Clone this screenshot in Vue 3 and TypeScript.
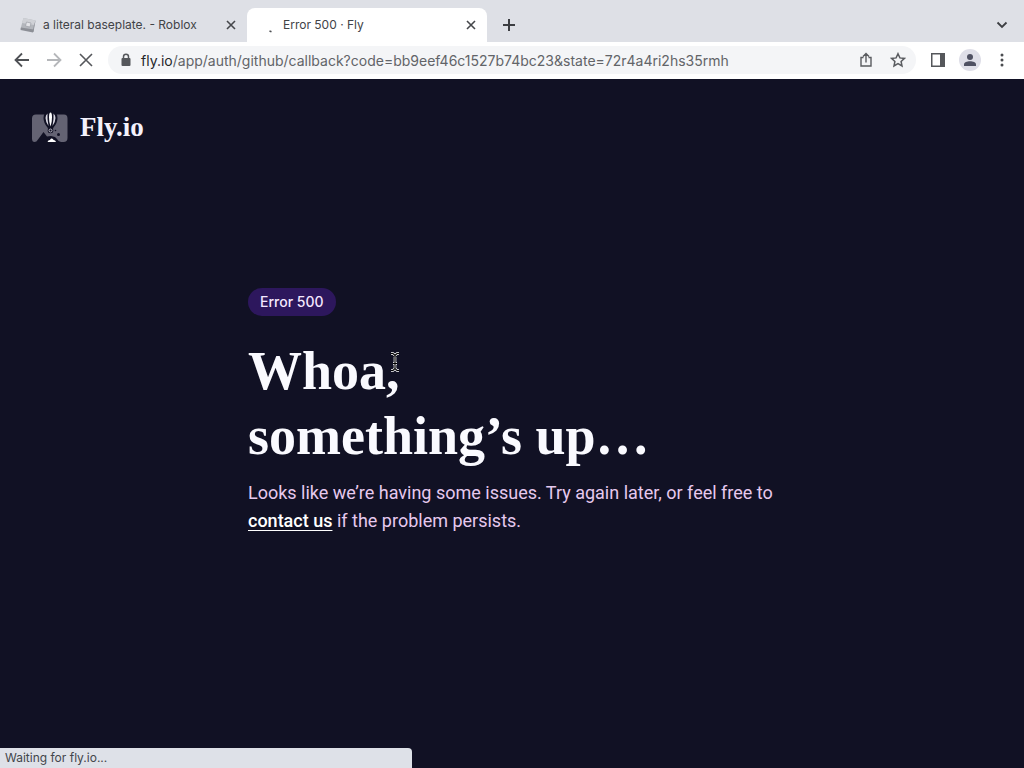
<script setup lang="ts">
import { ref } from 'vue'

interface Tab {
  title: string
  loading: boolean
}

const tabs: Tab[] = [
  { title: 'a literal baseplate. - Roblox', loading: false },
  { title: 'Error 500 · Fly', loading: true },
]
const active = ref(1)
const host = 'fly.io'
const path = ref('/app/auth/github/callback?code=bb9eef46c1527b74bc23&state=72r4a4ri2hs35rmh')
</script>

<template>
  <div class="window">
    <div class="tabstrip">
      <div v-for="(tab, i) in tabs" :key="tab.title" class="tab" :class="{ active: i === active }">
        <button class="tab-main" type="button" @click="active = i">
          <svg v-if="tab.loading" class="favicon" viewBox="0 0 16 16" aria-hidden="true">
            <path d="M9.500 14l2 .8" stroke="#4d4f53" stroke-width="1.5" />
          </svg>
          <svg v-else class="favicon" viewBox="0 0 16 16" aria-hidden="true">
            <path d="M3.500 1L15.500 3.500 13 14.500 0.500 12z" fill="#b3b6bc" />
            <path d="M3.500 1L15.500 3.500 14.500 8 2 6z" fill="#cfd1d6" />
            <path d="M1 10.500l12.500 2-.5 3L0.500 13z" fill="#8c8f96" />
            <path d="M14 8l1.500-4.500L13.500 15h-1z" fill="#8c8f96" />
            <path d="M6.500 5l4.500 1-1 4-4.500-1z" fill="#e3e4e8" stroke="#9da0a7" stroke-width=".7" />
          </svg>
          <span>{{ tab.title }}</span>
        </button>
        <button class="tab-close" type="button" :aria-label="`Close ${tab.title}`">
          <svg width="10" height="10" viewBox="0 0 10 10"><path d="M1 1l8 8M9 1L1 9" stroke="#45474b" stroke-width="1.6" /></svg>
        </button>
      </div>
      <button class="new-tab" type="button" aria-label="New tab">
        <svg width="14" height="14" viewBox="0 0 14 14"><path d="M7 1v12M1 7h12" stroke="#3c3e42" stroke-width="2" /></svg>
      </button>
      <button class="tab-search" type="button" aria-label="Search tabs">
        <svg width="12" height="8" viewBox="0 0 12 8"><path d="M1.500 1.500L6 6l4.500-4.500" fill="none" stroke="#3c3e42" stroke-width="1.800" /></svg>
      </button>
    </div>

    <div class="toolbar">
      <button class="tool" type="button" aria-label="Back">
        <svg width="16" height="16" viewBox="0 0 16 16"><path d="M15 8H2M8 1.500L1.500 8 8 14.500" fill="none" stroke="#4f5155" stroke-width="1.800" /></svg>
      </button>
      <button class="tool" type="button" aria-label="Forward">
        <svg width="16" height="16" viewBox="0 0 16 16"><path d="M1 8h13M8 1.500L14.500 8 8 14.500" fill="none" stroke="#b5b7ba" stroke-width="1.800" /></svg>
      </button>
      <button class="tool" type="button" aria-label="Stop loading">
        <svg width="16" height="16" viewBox="0 0 16 16"><path d="M2 2l12 12M14 2L2 14" stroke="#55575b" stroke-width="1.600" /></svg>
      </button>

      <div class="omnibox">
        <svg class="lock" width="10" height="14" viewBox="0 0 10 14" aria-hidden="true">
          <path d="M2.500 6V3.800a2.500 2.500 0 0 1 5 0V6" fill="none" stroke="#55575b" stroke-width="1.500" />
          <rect x="0.500" y="5" width="9" height="8" rx="1" fill="#55575b" />
        </svg>
        <label for="address">{{ host }}</label>
        <input id="address" v-model="path" type="text" spellcheck="false" />
        <button class="tool" type="button" aria-label="Share this page">
          <svg width="14" height="16" viewBox="0 0 14 16"><path d="M4.500 5.500H2v8.500h10V5.500H9.500M7 10.500V2M4 4.500l3-3 3 3" fill="none" stroke="#5a5c60" stroke-width="1.400" /></svg>
        </button>
        <button class="tool" type="button" aria-label="Bookmark this page">
          <svg width="16" height="16" viewBox="0 0 16 16"><path d="M8 1.700l1.900 4.200 4.600.5-3.400 3.100.9 4.500-4-2.300L4 14l.9-4.500-3.400-3.100 4.600-.5z" fill="none" stroke="#5a5c60" stroke-width="1.500" /></svg>
        </button>
      </div>

      <button class="tool" type="button" aria-label="Side panel">
        <svg width="14" height="14" viewBox="0 0 14 14"><rect x="0.750" y="0.750" width="12.500" height="12.500" fill="none" stroke="#55575b" stroke-width="1.500" /><path d="M9 1h4v12H9z" fill="#55575b" /></svg>
      </button>
      <button class="tool" type="button" aria-label="Profile">
        <svg width="22" height="22" viewBox="0 0 22 22"><circle cx="11" cy="11" r="11" fill="#dfdfe8" /><circle cx="11" cy="8" r="3" fill="#4f5162" /><path d="M5 17v-1.500c0-2 3-3.200 6-3.200s6 1.200 6 3.200V17z" fill="#4f5162" /></svg>
      </button>
      <button class="tool" type="button" aria-label="Menu">
        <svg width="4" height="16" viewBox="0 0 4 16" fill="#4a4c50"><circle cx="2" cy="3" r="1.500" /><circle cx="2" cy="8" r="1.500" /><circle cx="2" cy="13" r="1.500" /></svg>
      </button>
    </div>

    <div class="page">
      <header>
        <a class="brand" href="#">
          <svg width="36" height="32" viewBox="0 0 36 32" aria-hidden="true">
            <path d="M4 3.500h28q3.500 0 3.500 4V27q0 4-4 4h-2.500q-2.500 0-4-3l-2-2-4-1-4 .5-3.500-4.500-5.500 7.500q-1.500 2.500-3.500 2.500Q0 31 0 27.500V7.500q0-4 4-4z" fill="#646373" />
            <path d="M11.500 7Q11.500 0 18.500 0t7 7q0 5-4 9.500-1 1.500-1 5h-4q0-3.500-1-5-4-4.500-4-9.500z" fill="#111124" />
            <path d="M15.500 2.500q-2 1.500-2 4.500 0 3.500 3 8-1.500-7-1-12.500zM21.500 2.500q2 1.500 2 4.500 0 3.500-3 8 1.500-7 1-12.500z" fill="#d9d8e2" />
            <path d="M18.500 1.500q-1.500 0-1.500 5 0 5 1.500 9 1.500-4 1.500-9 0-5-1.500-5z" fill="#fff" />
            <circle cx="18.500" cy="19.500" r="2.800" fill="#111124" />
            <circle cx="18.500" cy="19.500" r="1.500" fill="none" stroke="#b8b7c3" stroke-width="1" />
            <circle cx="26.500" cy="23.500" r="1.500" fill="#111124" />
            <circle cx="23.500" cy="19.500" r=".8" fill="#111124" />
            <path d="M15.500 31q.5-2 2.500-2 .5-2 2-1.500 1.500.5 1.500 1.500 2 0 2.500 2z" fill="#fff" />
          </svg>
          <span>Fly.io</span>
        </a>
      </header>

      <main>
        <p class="badge">Error 500</p>
        <h1>
          Whoa,<br />something’s up…
          <svg class="caret" width="10" height="20" viewBox="0 0 10 20" aria-hidden="true">
            <path d="M1 1.500h2L5 3.500l2-2h2M5 3.500v13M1 18.500h2l2-2 2 2h2M3 11.500h4" fill="none" stroke="#fff" stroke-width="2.600" />
            <path d="M1 1.500h2L5 3.500l2-2h2M5 3.500v13M1 18.500h2l2-2 2 2h2M3 11.500h4" fill="none" stroke="#000" stroke-width="1.200" />
          </svg>
        </h1>
        <p class="message">
          Looks like we’re having some issues. Try again later, or feel free to
          <a href="#">contact us</a> if the problem persists.
        </p>
      </main>
    </div>

    <div class="status" role="status">Waiting for fly.io...</div>
  </div>
</template>

<style>
body {
  margin: 0;
  background: #111124;
}
</style>

<style scoped>
.window {
  display: flex;
  flex-direction: column;
  min-height: 100vh;
  font-family: Inter, "Liberation Sans", sans-serif;
  background: #111124;
}

button {
  display: flex;
  align-items: center;
  justify-content: center;
  padding: 0;
  border: 0;
  background: none;
  font: inherit;
  color: inherit;
}

.tabstrip {
  display: flex;
  align-items: center;
  height: 34px;
  padding: 8px 12px 0 7px;
  background: #dee0e6;
}

.tab {
  display: flex;
  align-items: center;
  box-sizing: border-box;
  width: 240px;
  height: 34px;
  padding: 0 10px 0 13px;
  border-radius: 8px 8px 0 0;
  font-size: 12px;
  color: #414347;
}

.tab.active {
  background: #fff;
}

.tab-main {
  flex: 1;
  justify-content: flex-start;
  gap: 7px;
  height: 34px;
  white-space: nowrap;
}

.tab-main span {
  padding-bottom: 2px;
}

.favicon {
  width: 16px;
  height: 16px;
}

.tab-close {
  width: 12px;
  height: 16px;
}

.new-tab {
  width: 28px;
  height: 28px;
  margin-left: 8px;
}

.tab-search {
  width: 20px;
  height: 28px;
  margin-left: auto;
}

.toolbar {
  display: flex;
  align-items: center;
  gap: 8px;
  height: 36px;
  padding: 0 10px 1px;
  background: #fff;
}

.tool {
  flex: none;
  width: 24px;
  height: 24px;
}

.omnibox {
  display: flex;
  flex: 1;
  align-items: center;
  box-sizing: border-box;
  height: 28px;
  margin: 0 2px;
  padding: 0 6px 0 13px;
  border-radius: 14px;
  background: #f4f5f7;
  font-size: 14px;
}

.lock {
  margin-right: 10px;
}

.omnibox label {
  color: #242529;
}

.omnibox input {
  flex: 1;
  min-width: 0;
  padding: 0;
  border: 0;
  outline: 0;
  background: none;
  font: inherit;
  color: #626468;
}

.omnibox .tool + .tool {
  margin-left: 8px;
}

.page {
  flex: 1;
  padding: 0 32px;
  color: #fafaff;
}

header {
  display: flex;
  padding-top: 30px;
}

.brand {
  display: flex;
  align-items: center;
  gap: 12px;
  height: 36px;
  font-family: "Liberation Serif", serif;
  font-size: 27px;
  font-weight: 700;
  color: #f4f2fc;
  text-decoration: none;
}

main {
  max-width: 528px;
  margin: 143px auto 0;
}

.badge {
  width: fit-content;
  margin: 0;
  padding: 0 12px;
  border-radius: 14px;
  background: #2d175d;
  font-size: 14px;
  font-weight: 500;
  line-height: 28px;
  color: #f4e8ff;
}

h1 {
  position: relative;
  margin: 23px 0 10px;
  font-family: "Liberation Serif", serif;
  font-size: 54px;
  font-weight: 700;
  line-height: 65px;
}

.caret {
  position: absolute;
  top: 13px;
  left: 142px;
}

.message {
  margin: 0;
  font-family: Roboto, "Liberation Sans", sans-serif;
  font-size: 18px;
  line-height: 28px;
  color: #e6c9ee;
}

.message a {
  font-weight: 500;
  color: #fff;
  text-decoration-thickness: 1px;
  text-underline-offset: 3px;
}

.status {
  position: fixed;
  bottom: 0;
  left: 0;
  box-sizing: border-box;
  width: 412px;
  max-width: 100%;
  padding: 0 5px;
  border-top-right-radius: 4px;
  background: #dee1e8;
  font-size: 12px;
  line-height: 20px;
  color: #43464b;
}
</style>
